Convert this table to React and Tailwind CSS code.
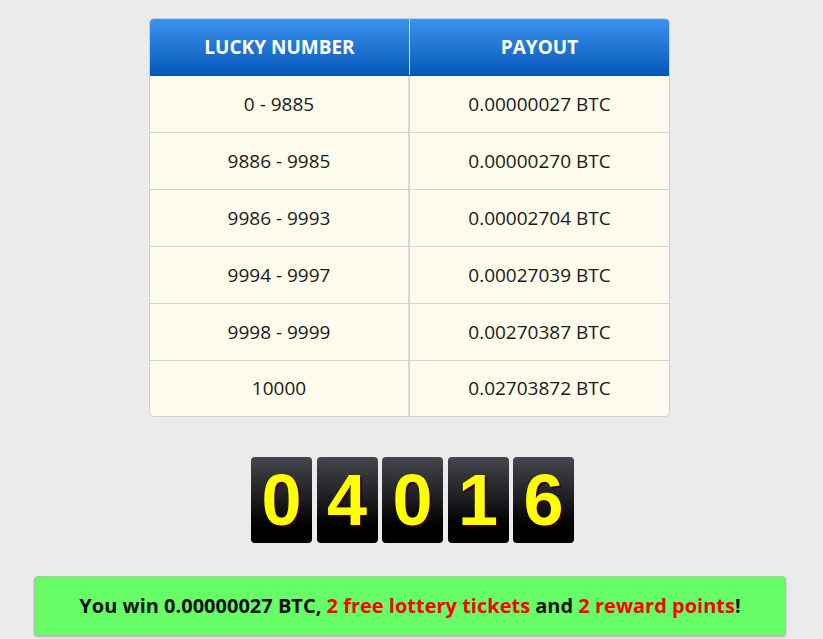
export default function App() {
  const rows = [
    ["0 - 9885", "0.00000027 BTC"],
    ["9886 - 9985", "0.00000270 BTC"],
    ["9986 - 9993", "0.00002704 BTC"],
    ["9994 - 9997", "0.00027039 BTC"],
    ["9998 - 9999", "0.00270387 BTC"],
    ["10000", "0.02703872 BTC"],
  ];
  const digits = ["0", "4", "0", "1", "6"];
  return (
    <div
      className="w-[823px] h-[639px] overflow-hidden bg-[#ebebeb] flex flex-col"
      style={{ fontFamily: '"Open Sans", sans-serif' }}
    >
      <div className="pt-[18px] pl-[149px]">
        <div className="w-[521px] rounded-[5px] border border-[#d0d0d0] bg-[#fdfbeb] overflow-hidden">
          <div className="flex h-[57px] bg-gradient-to-b from-[#3b93ee] to-[#0358b8] text-white font-bold text-[19px] border-b border-[#0352a8]">
            <div className="w-[260px] flex items-center justify-center border-r border-[#cfe2f7]">LUCKY NUMBER</div>
            <div className="flex-1 flex items-center justify-center">PAYOUT</div>
          </div>
          {rows.map((r, i) => (
            <div
              key={i}
              className={`flex text-[19px] text-[#1a1a1a] ${i < rows.length - 1 ? "h-[57px] border-b border-[#d4d4d4]" : "h-[55px]"}`}
            >
              <div className="w-[260px] flex items-center justify-center border-r-2 border-[#d6d6d6]">{r[0]}</div>
              <div className="flex-1 flex items-center justify-center">{r[1]}</div>
            </div>
          ))}
        </div>
      </div>
      <div className="mt-[40px] pl-[251px] flex gap-[4.5px]">
        {digits.map((d, i) => (
          <div
            key={i}
            className="w-[61px] h-[86px] rounded-[4px] bg-gradient-to-b from-[#44474d] via-[#1c1d20] to-[#000] flex items-center justify-center text-[#ffff00] font-bold text-[72px] leading-none"
            style={{ fontFamily: '"Liberation Sans", Arial, sans-serif', textShadow: "2px 2px 0 #3b0000" }}
          >
            {d}
          </div>
        ))}
      </div>
      <div className="mt-[33px] pl-[34px]">
        <div className="w-[752px] h-[60px] rounded-[4px] bg-[#66fd66] border border-[#a8c8a8] shadow-[0_1px_2px_rgba(0,0,0,0.25)] flex items-center justify-center font-bold text-[20px] text-[#111]">
          <span>
            You win 0.00000027 BTC, <span className="text-[#ff0000]">2 free lottery tickets</span> and{" "}
            <span className="text-[#ff0000]">2 reward points</span>!
          </span>
        </div>
      </div>
    </div>
  );
}
